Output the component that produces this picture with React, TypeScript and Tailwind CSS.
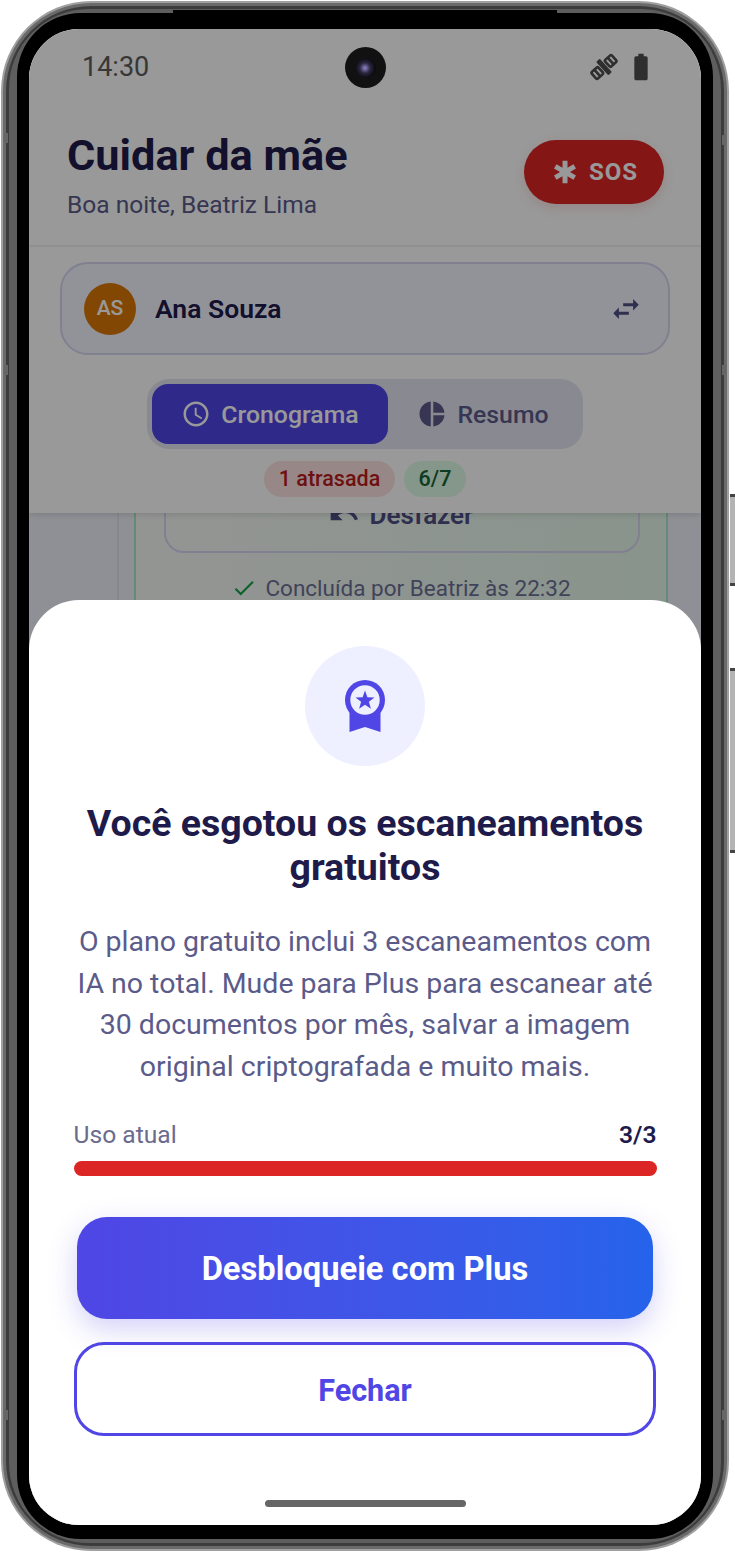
import React from 'react';
import {
  MdBatteryFull,
  MdEmergency,
  MdSwapHoriz,
  MdOutlineSchedule,
  MdPieChart,
  MdUndo,
  MdCheck,
} from 'react-icons/md';

const SideButton = ({ className }: { className: string }) => (
  <div className={`absolute left-[730px] w-[5px] bg-[#b4b4b4] border-y-[3px] border-[#444] ${className}`} />
);

const Band = ({ className }: { className: string }) => (
  <div className={`absolute w-[4px] h-[10px] bg-[#666] ${className}`} />
);

const SatelliteIcon = () => (
  <svg width="30" height="30" viewBox="0 0 30 30" className="text-[#4d4d4d]">
    <g transform="rotate(-42 15 15)" fill="none" stroke="currentColor" strokeWidth="2.6">
      <rect x="1.5" y="10.5" width="9" height="9" rx="1.5" />
      <path d="M6 10.5v9" />
      <rect x="19.5" y="10.5" width="9" height="9" rx="1.5" />
      <path d="M24 10.5v9" />
      <rect x="12.5" y="6" width="5" height="18" rx="1" fill="currentColor" stroke="none" />
    </g>
  </svg>
);

const AwardIcon = () => (
  <svg width="44" height="54" viewBox="0 0 44 54">
    <path d="M6.5 24H37.500V53L22 48L6.500 53Z" fill="#4f46e5" />
    <circle cx="22" cy="21" r="20" fill="#4f46e5" />
    <circle cx="22" cy="21" r="14.700" fill="#eef0ff" />
    <path
      d="M22 11.500L24.400 18.200L31.500 18.400L25.900 22.800L27.900 29.700L22 25.700L16.100 29.700L18.100 22.800L12.500 18.400L19.600 18.200Z"
      fill="#4f46e5"
    />
  </svg>
);

const StatusBar = () => (
  <div className="h-[76px] flex items-center justify-between pl-[53px] pr-[44px] text-[#5c5c5c]">
    <span className="text-[27px] leading-none">14:30</span>
    <div className="flex items-center gap-[6px]">
      <SatelliteIcon />
      <MdBatteryFull className="text-[32px] text-[#4d4d4d]" />
    </div>
  </div>
);

const Header = () => (
  <div className="relative z-10 bg-white shadow-[0_2px_6px_rgba(0,0,0,0.12)]">
    <StatusBar />
    <div className="flex items-center justify-between pl-[38px] pr-[37px] pb-[24px] pt-[25px] border-b-[2px] border-[#f0f0f4]">
      <div>
        <h1 className="text-[43.300px] leading-[52px] font-bold text-[#1e1b4b]">Cuidar da mãe</h1>
        <p className="text-[24.500px] leading-[32px] text-[#5b5b8a] mt-[7px]">Boa noite, Beatriz Lima</p>
      </div>
      <button className="w-[140px] h-[64px] rounded-full bg-[#dc2626] flex items-center justify-center gap-[9px] text-white font-bold text-[24px] tracking-[1px] shadow-[0_4px_12px_rgba(220,38,38,0.15)] -mt-[8px]">
        <MdEmergency className="text-[30px]" />
        SOS
      </button>
    </div>

    <div className="px-[31px] pt-[15px]">
      <div className="h-[93px] rounded-[28px] border-[2px] border-[#d6d6f2] bg-[#f4f5ff] flex items-center pl-[22px] pr-[25px]">
        <div className="w-[52px] h-[52px] rounded-full bg-[#d97706] flex items-center justify-center text-white text-[21px] font-medium">
          AS
        </div>
        <span className="ml-[19px] pt-[1px] text-[26.500px] font-semibold text-[#1e1b4b]">Ana Souza</span>
        <MdSwapHoriz className="ml-auto text-[34px] text-[#4f4f85]" />
      </div>
    </div>

    <div className="flex justify-center pt-[24px]">
      <div className="w-[436px] h-[70px] rounded-[22px] bg-[#e4e4f4] p-[5px] flex items-center">
        <div className="w-[236px] h-[60px] rounded-[16px] bg-[#4f46e5] flex items-center justify-center gap-[10px] text-white text-[24.800px] font-medium">
          <MdOutlineSchedule className="text-[30px]" />
          <span className="pt-[1px]">Cronograma</span>
        </div>
        <div className="flex-1 flex items-center justify-center gap-[10px] text-[#5b5b8a] text-[24.800px] font-medium">
          <MdPieChart className="text-[30px]" />
          <span className="pt-[1px]">Resumo</span>
        </div>
      </div>
    </div>

    <div className="flex justify-center gap-[9px] pt-[12px] pb-[16px]">
      <span className="h-[36px] w-[131px] rounded-full bg-[#fee2e2] flex items-center justify-center text-[21.500px] font-medium text-[#b91c1c]">
        1 atrasada
      </span>
      <span className="h-[36px] w-[62px] rounded-full bg-[#dcfce7] flex items-center justify-center text-[21.500px] font-medium text-[#166534]">
        6/7
      </span>
    </div>
  </div>
);

const Timeline = () => (
  <div className="flex-1 bg-[#eff0f8] overflow-hidden relative">
    <div className="absolute left-[88px] top-0 bottom-0 w-[2px] bg-[#e2e3ef]" />
    <div className="ml-[105px] w-[534px] -mt-[40px] h-[200px] rounded-[24px] border-[2px] border-[#a7e8c3] bg-gradient-to-r from-[#f6f8f6] to-[#e4f7ea] px-[28px]">
      <div className="h-[78px] w-[476px] rounded-[20px] border-[2px] border-[#d6d6f2] flex items-center justify-center gap-[10px] pr-[3px] pt-[2px] text-[#4f4f85] text-[26px] font-semibold">
        <MdUndo className="text-[32px]" />
        Desfazer
      </div>
      <div className="flex items-center justify-center gap-[8px] mt-[19px] text-[22.500px] leading-[32px] text-[#6b7094]">
        <MdCheck className="text-[26px] text-[#16a34a]" />
        Concluída por Beatriz às 22:32
      </div>
    </div>
  </div>
);

const Sheet = () => (
  <div className="absolute inset-x-0 bottom-0 h-[925px] bg-white rounded-t-[50px] z-30 flex flex-col items-center pt-[46px]">
    <div className="w-[120px] h-[120px] rounded-full bg-[#eef0ff] flex items-center justify-center">
      <AwardIcon />
    </div>
    <h2 className="mt-[35px] w-[600px] text-center text-[37.500px] leading-[44px] font-bold text-[#1e1b4b]">
      Você esgotou os escaneamentos gratuitos
    </h2>
    <p className="mt-[32px] w-[590px] text-center text-[28.500px] leading-[41.500px] text-[#5b5b8a]">
      O plano gratuito inclui 3 escaneamentos com IA no total. Mude para Plus para escanear até 30 documentos por mês, salvar a imagem original criptografada e muito mais.
    </p>
    <div className="mt-[30px] w-[583px]">
      <div className="flex items-center justify-between h-[36px] text-[24.600px]">
        <span className="text-[#6b6b8f]">Uso atual</span>
        <span className="font-semibold text-[#1e1b4b]">3/3</span>
      </div>
      <div className="mt-[8px] h-[15px] rounded-full bg-[#dc2626]" />
    </div>
    <button className="mt-[41px] w-[576px] h-[102px] pt-[4px] rounded-[30px] bg-gradient-to-r from-[#4f46e5] to-[#2563eb] text-white text-[32.700px] font-bold shadow-[0_10px_28px_rgba(79,70,229,0.25)]">
      Desbloqueie com Plus
    </button>
    <button className="mt-[23px] w-[582px] h-[94px] pt-[4px] rounded-[30px] border-[3px] border-[#4f46e5] text-[#4f46e5] text-[30.600px] font-bold">
      Fechar
    </button>
    <div className="absolute bottom-[18px] left-[236px] w-[201px] h-[7px] rounded-full bg-[#666]" />
  </div>
);

export default function App() {
  return (
    <div className="relative w-[735px] h-[1553px] bg-white overflow-hidden" style={{ fontFamily: 'Roboto, sans-serif' }}>
      <SideButton className="top-[494px] h-[92px]" />
      <SideButton className="top-[668px] h-[185px]" />

      <div className="absolute left-[1px] top-[1px] w-[728px] h-[1550px] rounded-[90px] bg-[#a0a0a0] p-[2px]">
        <div className="h-full rounded-[88px] bg-[#6a6a6a] p-[3px]">
          <div className="h-full rounded-[85px] bg-[#3c3c3c] p-[3px]">
            <div className="h-full rounded-[80px] bg-[#5e5e5e] px-[8px] py-[4px]">
              <div className="h-full rounded-[64px] bg-black px-[12px] pt-[16px] pb-[14px]">
                <div className="relative h-full rounded-[50px] overflow-hidden bg-white flex flex-col">
                  <Header />
                  <Timeline />
                  <div className="absolute inset-0 bg-black/40 z-20" />
                  <div className="absolute left-[316px] top-[18px] w-[41px] h-[41px] rounded-full bg-[#111] z-40 flex items-center justify-center">
                    <div className="w-[20px] h-[20px] rounded-full bg-[radial-gradient(circle_at_45%_50%,#8f87c9_0%,#2b2740_35%,#050505_75%)]" />
                  </div>
                  <Sheet />
                </div>
              </div>
            </div>
          </div>
        </div>
      </div>

      <div className="absolute left-[173px] top-[10px] w-[384px] h-[3px] bg-black" />
      <Band className="left-[4px] top-[133px]" />
      <Band className="left-[4px] top-[365px]" />
      <Band className="left-[4px] top-[1410px]" />
      <Band className="left-[722px] top-[135px]" />
      <Band className="left-[722px] top-[365px]" />
      <Band className="left-[722px] top-[1410px]" />
    </div>
  );
}
